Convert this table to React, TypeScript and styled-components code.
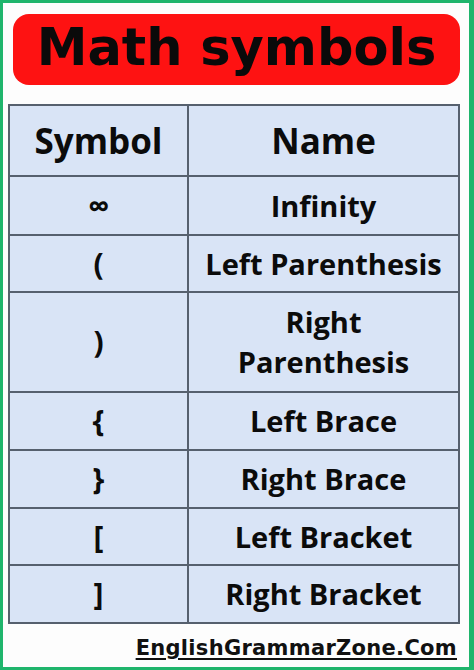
import React from "react";
import styled, { createGlobalStyle } from "styled-components";

const Global = createGlobalStyle`
  html, body { margin: 0; padding: 0; background: #ffffff; }
  * { box-sizing: border-box; }
`;

const Frame = styled.div`
  width: 474px;
  height: 670px;
  border: 3px solid #1fb56c;
  border-right-width: 5px;
  background: #fdfdfd;
  display: flex;
  flex-direction: column;
`;

const Banner = styled.div`
  margin: 11px 9px 0 10px;
  height: 71px;
  background: #fe1212;
  border-radius: 16px;
  display: flex;
  align-items: center;
  justify-content: center;
`;

const Title = styled.h1`
  margin: 0;
  font-family: "Comic Sans MS", "DejaVu Sans", sans-serif;
  font-weight: 700;
  font-size: 51px;
  line-height: 1;
  color: #0a0a0a;
  padding-bottom: 4px;
`;

const Table = styled.table`
  margin: 19px 9px 0 5px;
  width: 452px;
  border-collapse: collapse;
  background: #d9e4f6;
  border: 2px solid #56606e;
`;

const Cell = styled.td<{ $h: number; $head?: boolean; $sym?: boolean }>`
  border: 2px solid #56606e;
  height: ${(p) => p.$h}px;
  padding: 0 2px;
  text-align: center;
  vertical-align: middle;
  font-family: "Open Sans", "DejaVu Sans", sans-serif;
  font-weight: 700;
  font-size: ${(p) => (p.$head ? 35 : p.$sym ? 30 : 29)}px;
  line-height: 40px;
  color: #0b0b0b;
  &:first-child { width: 179px; }
`;

const Footer = styled.div`
  margin: 12px 12px 0 0;
  text-align: right;
`;

const Link = styled.span`
  font-family: "DejaVu Sans", sans-serif;
  font-weight: 700;
  font-size: 21px;
  letter-spacing: 0.3px;
  color: #111;
  text-decoration: underline;
  text-decoration-thickness: 2px;
  text-underline-offset: 3px;
`;

const rows: { sym: string; name: React.ReactNode; h: number }[] = [
  { sym: "∞", name: "Infinity", h: 59 },
  { sym: "(", name: "Left Parenthesis", h: 57 },
  { sym: ")", name: <>Right<br />Parenthesis</>, h: 100 },
  { sym: "{", name: "Left Brace", h: 58 },
  { sym: "}", name: "Right Brace", h: 58 },
  { sym: "[", name: "Left Bracket", h: 57 },
  { sym: "]", name: "Right Bracket", h: 58 },
];

export default function App() {
  return (
    <>
      <Global />
      <Frame>
        <Banner>
          <Title>Math symbols</Title>
        </Banner>
        <Table>
          <tbody>
            <tr>
              <Cell $h={71} $head>Symbol</Cell>
              <Cell $h={71} $head>Name</Cell>
            </tr>
            {rows.map((r, i) => (
              <tr key={i}>
                <Cell $h={r.h} $sym>{r.sym}</Cell>
                <Cell $h={r.h}>{r.name}</Cell>
              </tr>
            ))}
          </tbody>
        </Table>
        <Footer>
          <Link>EnglishGrammarZone.Com</Link>
        </Footer>
      </Frame>
    </>
  );
}
